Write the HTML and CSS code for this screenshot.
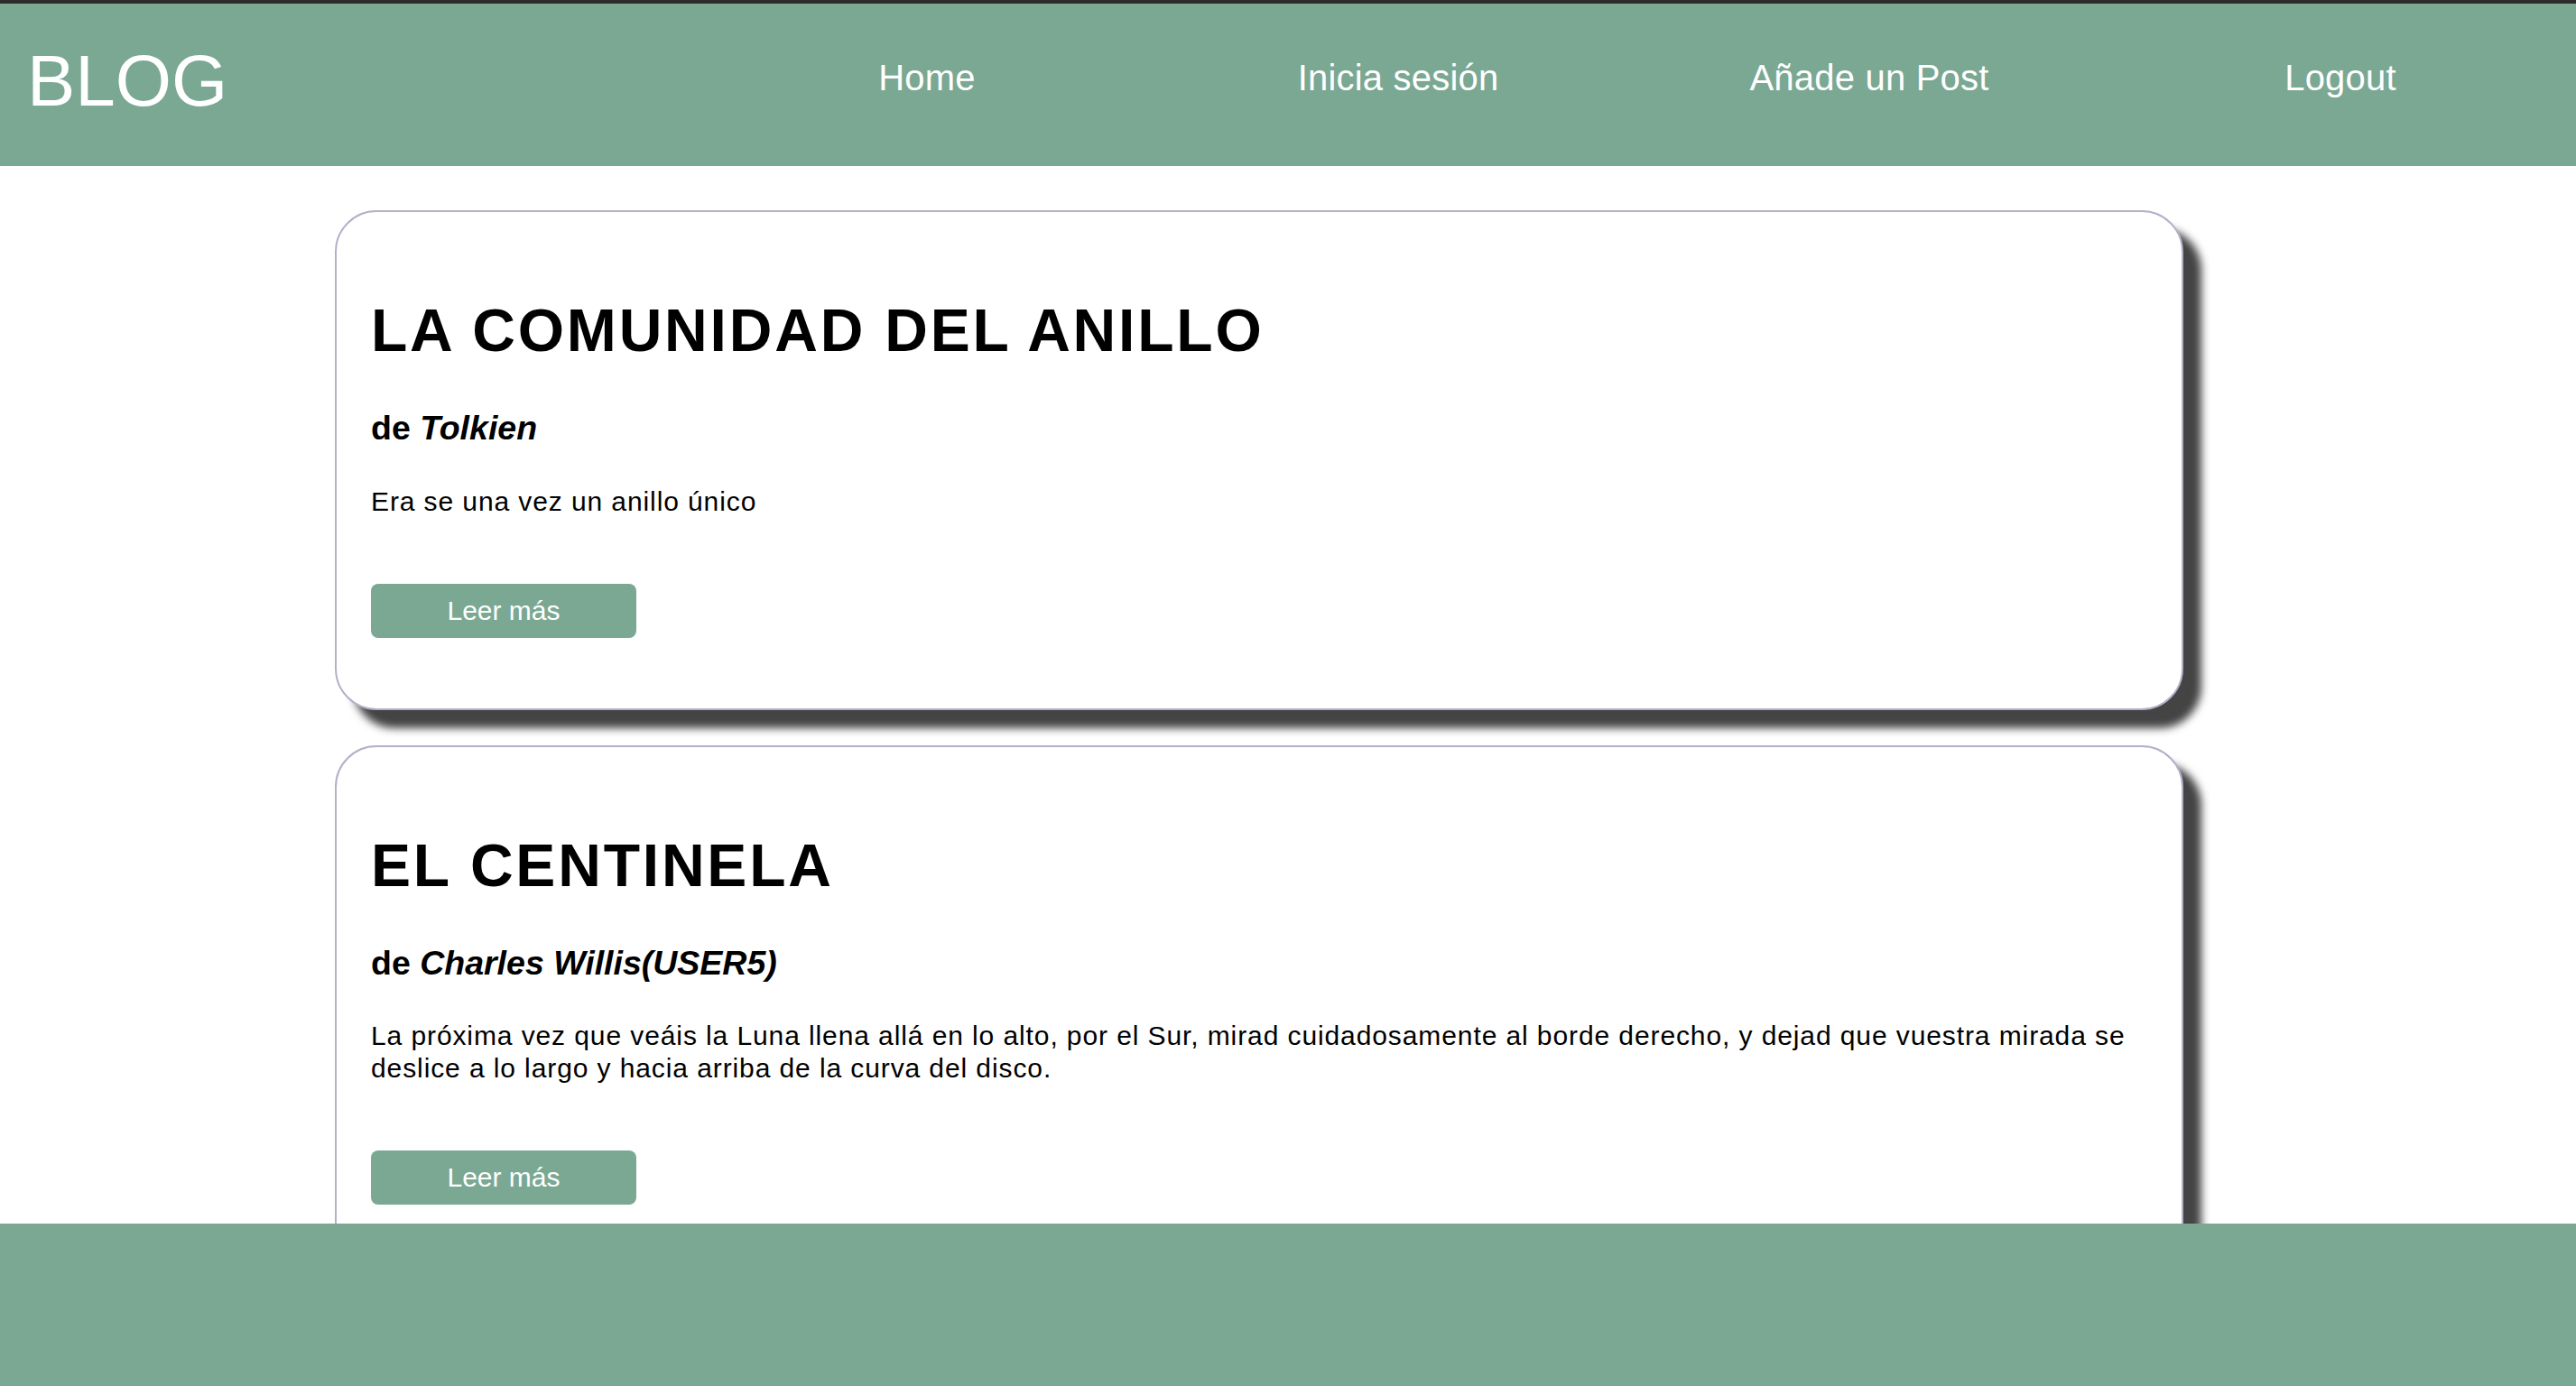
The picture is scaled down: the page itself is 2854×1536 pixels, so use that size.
FILE: index.html
```html
<!DOCTYPE html>
<html lang="es">
<head>
<meta charset="utf-8">
<title>Blog</title>
<link rel="stylesheet" href="styles.css">
</head>
<body>
<header class="site-header">
  <div class="logo">BLOG</div>
  <nav class="nav">
    <a class="nav-link" href="#">Home</a>
    <a class="nav-link" href="#">Inicia sesión</a>
    <a class="nav-link" href="#">Añade un Post</a>
    <a class="nav-link" href="#">Logout</a>
  </nav>
</header>
<main class="posts">
  <article class="card">
    <h2 class="card-title">LA COMUNIDAD DEL ANILLO</h2>
    <h3 class="card-author">de <em>Tolkien</em></h3>
    <p class="card-text">Era se una vez un anillo único</p>
    <a class="btn" href="#">Leer más</a>
  </article>
  <article class="card">
    <h2 class="card-title">EL CENTINELA</h2>
    <h3 class="card-author">de <em>Charles Willis(USER5)</em></h3>
    <p class="card-text">La próxima vez que veáis la Luna llena allá en lo alto, por el Sur, mirad cuidadosamente al borde derecho, y dejad que vuestra mirada se deslice a lo largo y hacia arriba de la curva del disco.</p>
    <a class="btn" href="#">Leer más</a>
  </article>
</main>
<footer class="site-footer"></footer>
</body>
</html>
```
FILE: styles.css
```css
html, body {
  margin: 0;
  padding: 0;
  background: #ffffff;
}
body {
  font-family: "Liberation Sans", Arial, Helvetica, sans-serif;
  color: #000000;
}
.site-header {
  border-top: 4px solid #2c2c2c;
  background: #7aa893;
  height: 180px;
  display: grid;
  grid-template-columns: 766px 1fr;
  align-items: start;
}
.logo {
  color: #ffffff;
  font-size: 80px;
  line-height: 1;
  padding: 46px 0 0 30px;
}
.nav {
  display: grid;
  grid-template-columns: repeat(4, 1fr);
}
.nav-link {
  color: #ffffff;
  text-decoration: none;
  font-size: 40px;
  line-height: 1;
  text-align: center;
  padding-top: 62px;
  letter-spacing: 0.2px;
}
.posts {
  padding: 49px 0 240px 371px;
}
.card {
  width: 2048px;
  box-sizing: border-box;
  border: 2px solid #b7aec7;
  border-radius: 46px;
  box-shadow: 20px 20px 10px #444444;
  background: #ffffff;
  padding: 98px 38px 78px 38px;
  margin-bottom: 39px;
}
.card-title {
  margin: 0;
  font-size: 66px;
  font-weight: bold;
  line-height: 1;
  letter-spacing: 2.8px;
}
.card-author {
  margin: 57px 0 0 0;
  font-size: 37.5px;
  font-weight: bold;
  line-height: 1;
}
.card-author em {
  font-style: italic;
}
.card-text {
  margin: 44px 0 0 0;
  font-size: 30px;
  line-height: 36px;
  letter-spacing: 0.9px;
}
.btn {
  display: flex;
  align-items: center;
  justify-content: center;
  width: 294px;
  height: 60px;
  margin-top: 73px;
  background: #7aa893;
  color: #ffffff;
  border-radius: 8px;
  text-decoration: none;
  font-size: 30px;
}
.site-footer {
  position: fixed;
  left: 0;
  right: 0;
  bottom: 0;
  height: 180px;
  background: #7aa893;
}
```
